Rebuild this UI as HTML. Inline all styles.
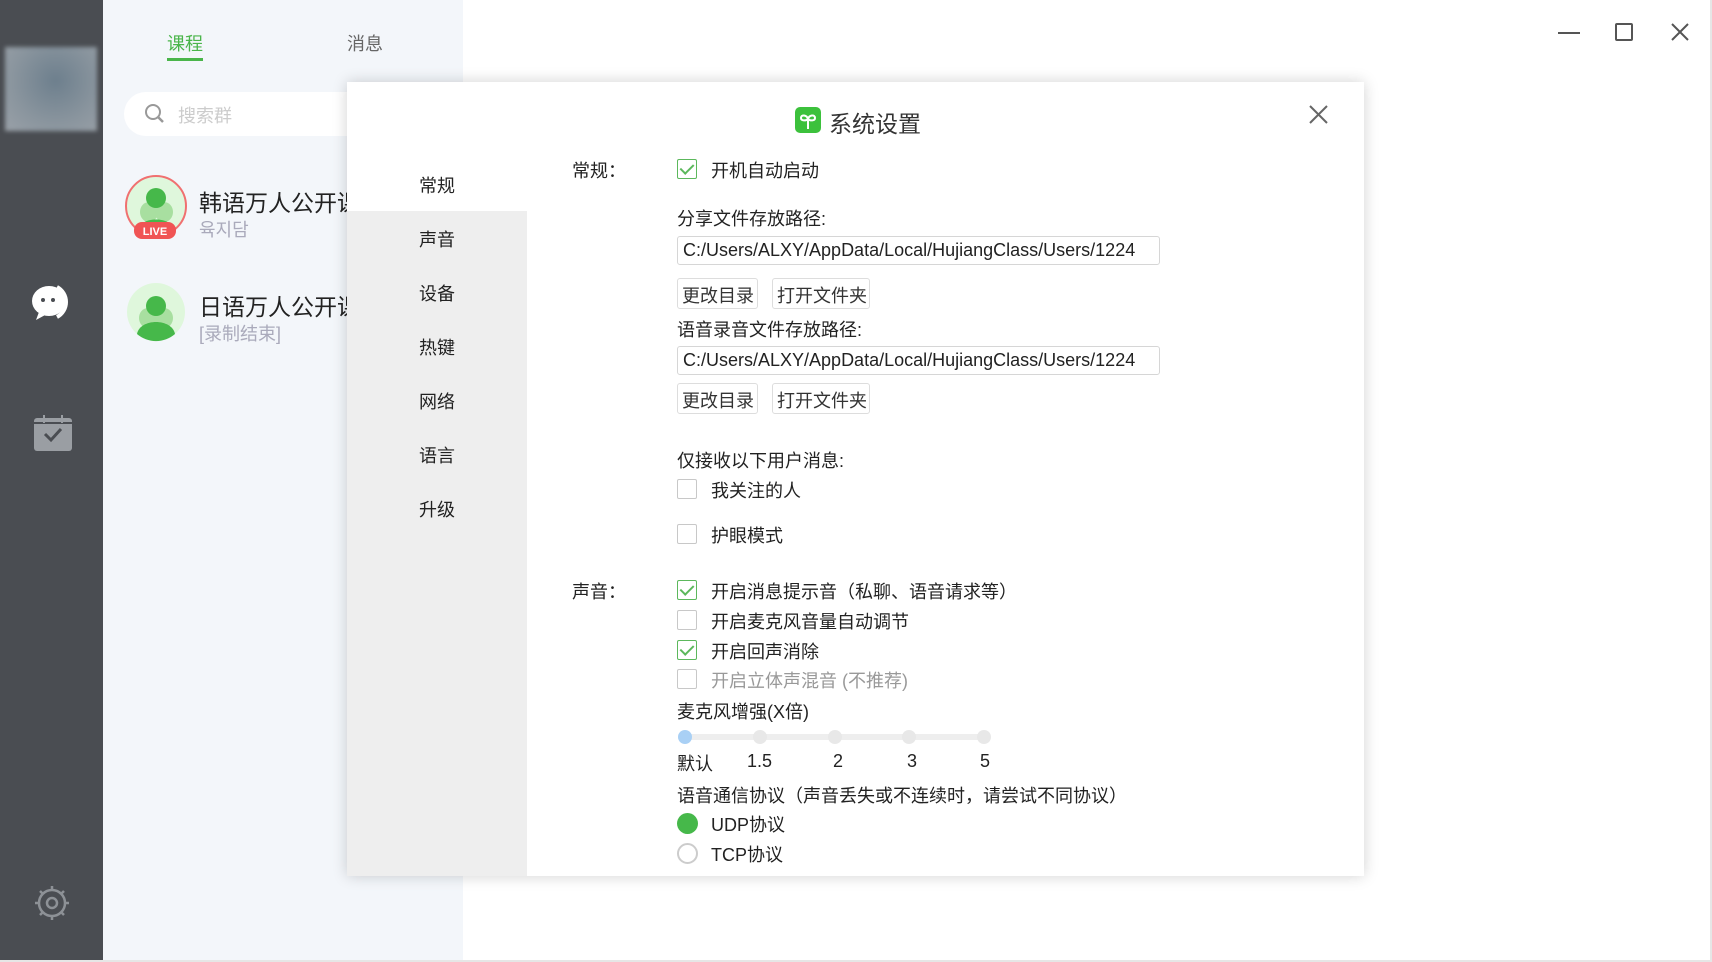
<!DOCTYPE html>
<html><head><meta charset="utf-8"><style>
*{margin:0;padding:0;box-sizing:border-box}
body{width:1712px;height:962px;position:relative;overflow:hidden;background:#fff;font-family:"Liberation Sans","Noto Sans CJK SC",sans-serif;color:#333}
.a{position:absolute;white-space:nowrap}
.side{left:0;top:0;width:103px;height:960px;background:#4a4d52}
.panel{left:103px;top:0;width:360px;height:960px;background:#f3f6fa}
.dlg{left:347px;top:82px;width:1017px;height:794px;background:#fff;box-shadow:0 0 14px rgba(0,0,0,.18)}
.menu{left:347px;top:211px;width:180px;height:665px;background:#eeeeee}
.mi{font-size:18px;color:#222;left:419px}
.t{font-size:18px;color:#222}
.cb{width:20px;height:20px;border:1.5px solid #c8c8c8;border-radius:2px;left:677px;background:#fff}
.cb.on{border-color:#5cb85c}
.cb.on::after{content:"";position:absolute;left:5px;top:1px;width:6px;height:11px;border:solid #5cb85c;border-width:0 2px 2px 0;transform:rotate(45deg)}
.inp{left:677px;width:483px;height:29px;border:1px solid #d6d6d6;border-radius:3px;font-size:18px;padding:3px 0 0 5px;overflow:hidden;color:#222}
.btn{height:31px;border:1px solid #ddd;border-radius:3px;font-size:18px;padding:3px 0 0 4px;color:#333;background:#fff}
</style></head><body>
<div class="a side"></div>
<div class="a" style="left:5px;top:47px;width:92px;height:84px;background:radial-gradient(ellipse at 55% 40%,#6d7f8d,#8a959e 60%,#9aa1a8);filter:blur(2px)"></div>
<svg class="a" style="left:29px;top:282px" width="46" height="40" viewBox="0 0 46 40"><path d="M28 5a17 17 0 0 1 0 30" stroke="#fff" stroke-width="4" fill="none"/><ellipse cx="20" cy="19" rx="17" ry="15" fill="#fff"/><path d="M10 30 L7 38 L18 32Z" fill="#fff"/><circle cx="14" cy="18" r="2" fill="#4a4d52"/><circle cx="24" cy="18" r="2" fill="#4a4d52"/></svg>
<svg class="a" style="left:33px;top:414px" width="40" height="38" viewBox="0 0 40 38"><rect x="1" y="4" width="38" height="33" rx="3" fill="#9a9ea3"/><rect x="1" y="8" width="38" height="2" fill="#4a4d52"/><rect x="10" y="1" width="2" height="8" fill="#9a9ea3"/><rect x="28" y="1" width="2" height="8" fill="#9a9ea3"/><path d="M12 20l6 6 10-11" stroke="#4a4d52" stroke-width="3" fill="none"/></svg>
<svg class="a" style="left:33px;top:884px" width="38" height="38" viewBox="0 0 38 38"><circle cx="19" cy="19" r="13" stroke="#8d9196" stroke-width="2.5" fill="none"/><circle cx="19" cy="19" r="5" stroke="#8d9196" stroke-width="2.5" fill="none"/><g stroke="#8d9196" stroke-width="2.5"><path d="M19 2v5M19 31v5M2 19h5M31 19h5M7 7l3 3M28 28l3 3M7 31l3-3M28 10l3-3"/></g></svg>
<div class="a panel"></div>
<div class="a" style="left:167px;top:30px;font-size:18px;color:#4ab54a">课程</div>
<div class="a" style="left:167px;top:58px;width:36px;height:3px;background:#4ab54a"></div>
<div class="a" style="left:347px;top:30px;font-size:18px;color:#666">消息</div>
<div class="a" style="left:124px;top:92px;width:280px;height:44px;background:#fff;border-radius:22px"></div>
<svg class="a" style="left:144px;top:103px" width="22" height="22" viewBox="0 0 22 22"><circle cx="9" cy="9" r="7" stroke="#999" stroke-width="2" fill="none"/><path d="M14 14l5 5" stroke="#999" stroke-width="2.5"/></svg>
<div class="a" style="left:178px;top:102px;font-size:18px;color:#ccc">搜索群</div>
<svg class="a" style="left:124px;top:174px" width="64" height="68" viewBox="0 0 64 68"><circle cx="32" cy="32" r="30" fill="#dff7dc" stroke="#f07070" stroke-width="2"/><ellipse cx="25" cy="38" rx="9" ry="10" fill="#a8dfa0"/><ellipse cx="40" cy="38" rx="9" ry="10" fill="#a8dfa0"/><circle cx="32" cy="24" r="10" fill="#46b84a"/><path d="M14 56c2-14 34-14 36 0z" fill="#46b84a"/><rect x="10" y="48" width="42" height="17" rx="8" fill="#f05454"/><text x="31" y="61" font-size="11" font-weight="bold" fill="#fff" text-anchor="middle" font-family="Liberation Sans">LIVE</text></svg>
<div class="a" style="left:199px;top:184px;font-size:23px;color:#222">韩语万人公开课</div>
<div class="a" style="left:199px;top:216px;font-size:18px;color:#aab">육지담</div>
<svg class="a" style="left:126px;top:282px" width="60" height="60" viewBox="0 0 60 60"><circle cx="30" cy="30" r="29" fill="#dff7dc"/><ellipse cx="22" cy="36" rx="9" ry="10" fill="#a8dfa0"/><ellipse cx="38" cy="36" rx="9" ry="10" fill="#a8dfa0"/><circle cx="30" cy="24" r="10" fill="#46b84a"/><path d="M11 52c3-16 35-16 38 0a29 29 0 0 1-38 0z" fill="#46b84a"/></svg>
<div class="a" style="left:199px;top:288px;font-size:23px;color:#222">日语万人公开课</div>
<div class="a" style="left:199px;top:320px;font-size:18px;color:#aab">[录制结束]</div>
<div class="a" style="left:1710px;top:0;width:2px;height:962px;background:#e6e6e6"></div>
<div class="a" style="left:0;top:960px;width:1712px;height:2px;background:#e6e6e6"></div>
<div class="a" style="left:1558px;top:32px;width:22px;height:2px;background:#555"></div>
<div class="a" style="left:1615px;top:23px;width:18px;height:18px;border:2px solid #555;border-radius:2px"></div>
<svg class="a" style="left:1670px;top:22px" width="20" height="20"><path d="M2 2l16 16M18 2L2 18" stroke="#555" stroke-width="2"/></svg>
<div class="a dlg"></div>
<div class="a menu"></div>
<div class="a mi" style="top:172px">常规</div>
<div class="a mi" style="top:226px">声音</div>
<div class="a mi" style="top:280px">设备</div>
<div class="a mi" style="top:334px">热键</div>
<div class="a mi" style="top:388px">网络</div>
<div class="a mi" style="top:442px">语言</div>
<div class="a mi" style="top:496px">升级</div>
<svg class="a" style="left:795px;top:107px" width="26" height="26" viewBox="0 0 26 26"><rect width="26" height="26" rx="5" fill="#3cc13c"/><path d="M13 22V12M13 12c-1-4-7-5-7-1 0 3 5 3 7 1M13 12c1-4 7-5 7-1 0 3-5 3-7 1" stroke="#fff" stroke-width="2" fill="none"/></svg>
<div class="a" style="left:829px;top:105px;font-size:23px;color:#333">系统设置</div>
<svg class="a" style="left:1309px;top:105px" width="19" height="19"><path d="M1 1l17 17M18 1L1 18" stroke="#666" stroke-width="2"/></svg>
<div class="a t" style="left:572px;top:157px">常规：</div>
<div class="a cb on" style="top:159px"></div><div class="a t" style="left:711px;top:157px">开机自动启动</div>
<div class="a t" style="left:677px;top:205px">分享文件存放路径:</div>
<div class="a inp" style="top:236px">C:/Users/ALXY/AppData/Local/HujiangClass/Users/1224</div>
<div class="a btn" style="left:677px;top:278px;width:81px">更改目录</div>
<div class="a btn" style="left:772px;top:278px;width:98px">打开文件夹</div>
<div class="a t" style="left:677px;top:316px">语音录音文件存放路径:</div>
<div class="a inp" style="top:346px">C:/Users/ALXY/AppData/Local/HujiangClass/Users/1224</div>
<div class="a btn" style="left:677px;top:383px;width:81px">更改目录</div>
<div class="a btn" style="left:772px;top:383px;width:98px">打开文件夹</div>
<div class="a t" style="left:677px;top:447px">仅接收以下用户消息:</div>
<div class="a cb" style="top:479px"></div><div class="a t" style="left:711px;top:477px">我关注的人</div>
<div class="a cb" style="top:524px"></div><div class="a t" style="left:711px;top:522px">护眼模式</div>
<div class="a t" style="left:572px;top:578px">声音：</div>
<div class="a cb on" style="top:580px"></div><div class="a t" style="left:711px;top:578px">开启消息提示音（私聊、语音请求等）</div>
<div class="a cb" style="top:610px"></div><div class="a t" style="left:711px;top:608px">开启麦克风音量自动调节</div>
<div class="a cb on" style="top:640px"></div><div class="a t" style="left:711px;top:638px">开启回声消除</div>
<div class="a cb" style="top:669px"></div><div class="a t" style="left:711px;top:667px;color:#999">开启立体声混音 (不推荐)</div>
<div class="a t" style="left:677px;top:698px">麦克风增强(X倍)</div>
<div class="a" style="left:685px;top:734px;width:300px;height:6px;background:#eee;border-radius:3px"></div>
<div class="a" style="left:678px;top:730px;width:14px;height:14px;border-radius:50%;background:#a9d0f5"></div>
<div class="a" style="left:753px;top:730px;width:14px;height:14px;border-radius:50%;background:#e8e8e8"></div>
<div class="a" style="left:828px;top:730px;width:14px;height:14px;border-radius:50%;background:#e8e8e8"></div>
<div class="a" style="left:902px;top:730px;width:14px;height:14px;border-radius:50%;background:#e8e8e8"></div>
<div class="a" style="left:977px;top:730px;width:14px;height:14px;border-radius:50%;background:#e8e8e8"></div>
<div class="a t" style="left:677px;top:750px">默认</div>
<div class="a t" style="left:747px;top:751px">1.5</div>
<div class="a t" style="left:833px;top:751px">2</div>
<div class="a t" style="left:907px;top:751px">3</div>
<div class="a t" style="left:980px;top:751px">5</div>
<div class="a t" style="left:677px;top:782px">语音通信协议（声音丢失或不连续时，请尝试不同协议）</div>
<div class="a" style="left:677px;top:813px;width:21px;height:21px;border-radius:50%;background:#46b84a"></div>
<div class="a t" style="left:711px;top:811px">UDP协议</div>
<div class="a" style="left:677px;top:843px;width:21px;height:21px;border-radius:50%;border:2px solid #ccc"></div>
<div class="a t" style="left:711px;top:841px">TCP协议</div>
</body></html>
